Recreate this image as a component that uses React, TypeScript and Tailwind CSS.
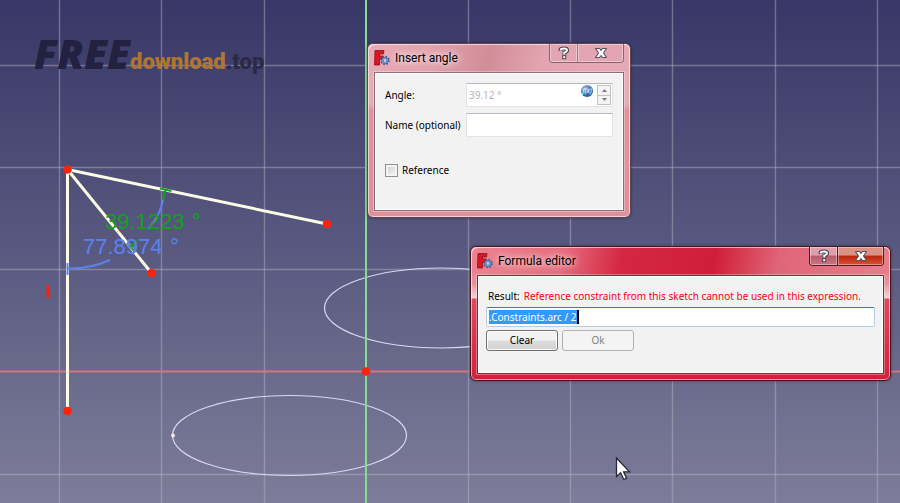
import { useEffect, useRef } from 'react';
import type { ReactNode } from 'react';
import clsx from 'clsx';

const GRID_X = [59, 161, 264, 468, 570, 672, 775, 877];
const GRID_Y = [65, 167, 269, 474];

function AppIcon() {
  return (
    <svg viewBox="0 0 16 16" className="size-4 shrink-0" aria-hidden="true">
      <path d="M1 0.5H10L9.5 4H5.5V6H9V9.2H5.5V15H0.5z" fill="#dc1620" stroke="#8c1218" strokeWidth="0.8" />
      <circle
        cx="11"
        cy="10.5"
        r="3.8"
        fill="none"
        stroke="#35609a"
        strokeWidth="2"
        strokeDasharray="1.492 1.492"
      />
      <circle cx="11" cy="10.5" r="2.4" fill="none" stroke="#35609a" strokeWidth="2.4" />
      <circle cx="11" cy="10.5" r="2.3" fill="none" stroke="#6d9bd3" strokeWidth="1.4" />
      <circle cx="11" cy="10.5" r="1.2" fill="#e9c9d2" />
    </svg>
  );
}

function HelpGlyph() {
  return (
    <svg viewBox="0 0 12 14" className="h-3.5 w-3" fill="none" aria-hidden="true">
      <path
        d="M2.5 5V3.5Q2.5 2.3 6 2.3T9.2 4.5Q9.2 5.8 6.4 6.8V8.8"
        stroke="#4b4550"
        strokeWidth="3.8"
      />
      <rect x="4.2" y="9.2" width="4" height="4" fill="#4b4550" />
      <path
        d="M2.8 4.6V3.8Q2.8 2.5 6 2.5T9 4.5Q9 5.6 6.3 6.6V8.4"
        stroke="#fff"
        strokeWidth="2"
      />
      <rect x="5.2" y="10.2" width="2" height="2" fill="#fff" />
    </svg>
  );
}

function CloseGlyph() {
  return (
    <svg viewBox="0 0 14 12" className="h-3 w-3.5" fill="none" aria-hidden="true">
      <path
        d="M1.5 1.5H5.5L7 3.3L8.5 1.5H12.5L9.5 6L12.5 10.5H8.5L7 8.7L5.5 10.5H1.5L4.5 6z"
        fill="#fff"
        stroke="#5a5460"
        strokeWidth="1.1"
        strokeLinejoin="round"
      />
    </svg>
  );
}

interface DialogWindowProps {
  title: string;
  active?: boolean;
  className?: string;
  children: ReactNode;
}

function DialogWindow({ title, active = false, className, children }: DialogWindowProps) {
  return (
    <section
      aria-label={title}
      className={clsx(
        'absolute flex flex-col rounded-md border px-1.5 pb-1.5 shadow-[inset_0_0_0_1px_#ffffff90,0_0_3px_#00000070]',
        active
          ? 'border-[#4a1822] bg-[linear-gradient(#e87888_0,#ea8e9b_36px,#f6d3d8_51px,#dc4a60_52px,#d51f3c_100%)]'
          : 'border-[#5a4652] bg-[linear-gradient(#e6aab6_0,#e6acb7_60px,#df939f_66px,#de919d_100%)]',
        className,
      )}
    >
      <header
        className={clsx(
          '-mx-1.5 flex h-7 shrink-0 items-start justify-between rounded-t-md px-1.5 shadow-[inset_1px_1px_0_#ffffff90,inset_-1px_0_0_#ffffff90]',
          active
            ? 'bg-[linear-gradient(100deg,#ea8492_0%,#e66b7d_22%,#d42743_36%,#d01e39_58%,#df6577_73%,#e67f8d_100%)]'
            : 'bg-[linear-gradient(105deg,#e8acb6_0%,#e3a1ad_25%,#d18e99_46%,#e2a4b0_66%,#e6aab6_100%)]',
        )}
      >
        <div className="flex h-7 items-center gap-[5px]">
          <AppIcon />
          <h2 className="font-['Roboto',sans-serif] text-xs leading-4 text-black [text-shadow:0_0_6px_#fff,0_0_10px_#ffffffb0]">
            {title}
          </h2>
        </div>
        <div
          className={clsx(
            'flex h-[19px] overflow-hidden rounded-b border border-t-0',
            active ? 'border-[#5b1722]' : 'border-[#8c6270]',
          )}
        >
          <button
            type="button"
            aria-label="Help"
            className={clsx(
              'flex w-7 items-center justify-center border-r shadow-[inset_0_0_0_1px_#ffffff60]',
              active
                ? 'border-[#5b1722] bg-[linear-gradient(#dfa0ac_45%,#b65a6c_50%,#d07585)]'
                : 'border-[#a87683] bg-[#e2a5b1]',
            )}
          >
            <HelpGlyph />
          </button>
          <button
            type="button"
            aria-label="Close"
            className={clsx(
              'flex w-[45px] items-center justify-center shadow-[inset_0_0_0_1px_#ffffff60]',
              active ? 'bg-[linear-gradient(#dc9185_45%,#b9270f_50%,#dc5030)]' : 'bg-[#e2a5b1]',
            )}
          >
            <CloseGlyph />
          </button>
        </div>
      </header>
      <div
        className={clsx(
          'flex-1 border bg-[#f2f2f2] shadow-[inset_0_0_0_1px_#fff,0_0_0_1px_#ffffff50]',
          active ? 'border-[#8a2535]' : 'border-[#8f6c75]',
        )}
      >
        {children}
      </div>
    </section>
  );
}

function InsertAngleDialog() {
  return (
    <DialogWindow title="Insert angle" className="top-[43px] left-[367px] w-[264px]">
      <form className="flex flex-col px-2.5 pt-2.5 pb-8">
        <div className="grid grid-cols-[81px_minmax(0,1fr)] items-center gap-y-1.5">
          <label htmlFor="angle">Angle:</label>
          <div className="flex h-6 border border-[#e1e3ea] border-t-[#b5b8c2] bg-white p-px">
            <input
              id="angle"
              type="text"
              disabled
              defaultValue="39.12 °"
              className="min-w-0 flex-1 px-px text-[#b4b4b4]"
            />
            <button
              type="button"
              aria-label="Edit formula"
              className="mr-1 flex size-3 items-center justify-center rounded-full bg-[radial-gradient(circle_at_35%_25%,#8db9e6,#2e66a8_60%,#1f4c86)] text-[7px] leading-3 text-white italic"
            >
              f(x)
            </button>
            <div className="flex w-3.5 flex-col">
              <button
                type="button"
                aria-label="Increase"
                className="flex flex-1 items-center justify-center border border-[#c2c2c2] bg-[#f4f4f4]"
              >
                <svg viewBox="0 0 5 3" className="h-[3px] w-[5px]" aria-hidden="true">
                  <path d="M0 3L2.5 0L5 3z" fill="#7b7b7b" />
                </svg>
              </button>
              <button
                type="button"
                aria-label="Decrease"
                className="flex flex-1 items-center justify-center border border-t-0 border-[#c2c2c2] bg-[#f4f4f4]"
              >
                <svg viewBox="0 0 5 3" className="h-[3px] w-[5px]" aria-hidden="true">
                  <path d="M0 0L2.5 3L5 0z" fill="#7b7b7b" />
                </svg>
              </button>
            </div>
          </div>
          <label htmlFor="name" className="whitespace-nowrap">
            Name (optional)
          </label>
          <input
            id="name"
            type="text"
            className="h-6 w-full min-w-0 border border-[#e1e3ea] border-t-[#b5b8c2] bg-white px-1"
          />
        </div>
        <label className="mt-[26px] flex items-center gap-1">
          <input
            type="checkbox"
            className="size-[13px] appearance-none border border-[#8e8f8f] bg-[linear-gradient(135deg,#c9cdd3,#f6f6f6)] shadow-[inset_0_0_0_2px_#f4f4f4]"
          />
          Reference
        </label>
      </form>
    </DialogWindow>
  );
}

function FormulaEditorDialog() {
  const expressionRef = useRef<HTMLInputElement>(null);

  useEffect(() => {
    expressionRef.current?.focus();
    expressionRef.current?.select();
  }, []);

  return (
    <DialogWindow active title="Formula editor" className="top-[246px] left-[470px] w-[421px]">
      <form className="flex flex-col px-2 pt-3 pb-[22px]">
        <label htmlFor="expression" className="flex gap-1 px-0.5 leading-4 whitespace-nowrap">
          Result:
          <output className="text-[#f5000f]">
            Reference constraint from this sketch cannot be used in this expression.
          </output>
        </label>
        <div className="relative mt-[3px]">
          <input
            id="expression"
            ref={expressionRef}
            type="text"
            defaultValue=".Constraints.arc / 2"
            className="h-5 w-full rounded-xs border border-[#b5cfe7] border-t-[#3d7bad] bg-white px-0.5 outline-none selection:bg-[#3399ff] selection:text-white"
          />
          <span className="absolute top-[3px] left-[91px] h-3.5 w-0.5 bg-black" />
        </div>
        <div className="mt-[3px] flex gap-1">
          <button
            type="button"
            className="h-[21px] w-[72px] rounded-[3px] border border-[#707070] bg-[linear-gradient(#f2f2f2_48%,#dddddd_52%,#cfcfcf)] shadow-[inset_0_0_0_1px_#fcfcfc]"
          >
            Clear
          </button>
          <button
            type="submit"
            disabled
            className="h-[21px] w-[72px] rounded-[3px] border border-[#adb2b5] bg-[#f4f4f4] text-[#838383]"
          >
            Ok
          </button>
        </div>
      </form>
    </DialogWindow>
  );
}

function SketchCanvas() {
  return (
    <svg className="absolute inset-0 h-full w-full" aria-label="Sketch">
      <g stroke="#b9b9c4" strokeOpacity="0.45">
        {GRID_X.map((x) => (
          <line key={x} x1={x + 0.5} x2={x + 0.5} y1="0" y2="100%" strokeWidth="1.4" />
        ))}
        {GRID_Y.map((y) => (
          <line key={y} y1={y + 0.5} y2={y + 0.5} x1="0" x2="100%" strokeWidth="1.4" />
        ))}
      </g>
      <line x1="0" x2="100%" y1="371.5" y2="371.5" stroke="#d8757a" strokeWidth="1.8" />

      <g fill="none" stroke="#d9d9f2" strokeWidth="1.2">
        <ellipse cx="289.5" cy="435.5" rx="117" ry="40" />
        <ellipse cx="441.5" cy="308" rx="117" ry="40" />
      </g>
      <circle cx="173" cy="435.5" r="2" fill="#f7e6f0" />
      <line x1="366" x2="366" y1="0" y2="100%" stroke="#86dc90" strokeWidth="2" />

      {/* Sketch geometry */}
      <g stroke="#fbfbe6" strokeWidth="3" strokeLinecap="round">
        <path d="M67.5 169.5V411" />
        <path d="M67.5 169.5L151.5 273" />
        <path d="M67.5 169.5L327 224" />
      </g>

      {/* Constraints */}
      <g fill="none" stroke="#5b82f0" strokeWidth="2">
        <path d="M163 200Q160 216 148 229" />
        <path d="M68 268.5Q90 269 110 260" />
        <path d="M67.5 263V275" />
      </g>
      <g fill="none" stroke="#14a01c" strokeWidth="2">
        <path d="M160 188.5L171.5 191M165.5 190L163 200" />
        <path d="M127 243L135 252M130.5 247L137 241" />
      </g>
      <g fontFamily="'Liberation Sans', Arial, sans-serif" fontSize="22">
        <text x="83" y="254" fill="#5b82f0">
          77.8974
        </text>
        <text x="170" y="254" fill="#5b82f0">
          °
        </text>
        <text x="105" y="229" fill="#14a01c">
          39.1223
        </text>
        <text x="192" y="229" fill="#14a01c">
          °
        </text>
      </g>
      <rect x="46.5" y="285" width="3" height="13" fill="#f5210d" />

      <g fill="#fb230c">
        <circle cx="67.5" cy="169.5" r="4.3" />
        <circle cx="67.5" cy="411" r="4.3" />
        <circle cx="151.5" cy="273" r="4.3" />
        <circle cx="327" cy="224" r="4.3" />
        <circle cx="366" cy="371.5" r="4.3" />
      </g>
    </svg>
  );
}

export default function App() {
  return (
    <main className="relative min-h-screen w-full overflow-hidden bg-linear-to-b from-[#383767] to-[#7d7d99] font-['Noto_Sans',sans-serif] text-[10px] text-black">
      <SketchCanvas />

      <div className="absolute top-[31px] left-[34px] flex items-baseline">
        <span className="font-['Open_Sans',sans-serif] text-[41px] leading-[44px] font-extrabold text-[#222140] italic">
          FREE
        </span>
        <span className="font-['Roboto',sans-serif] text-[22px] font-black text-[#b0762f]">
          download
        </span>
        <span className="font-['Roboto',sans-serif] text-[22px] font-black text-[#2a2947]">
          .top
        </span>
      </div>

      <InsertAngleDialog />
      <FormulaEditorDialog />

      <svg viewBox="0 0 16 24" className="absolute top-[457px] left-[615px] h-6 w-4" aria-hidden="true">
        <path
          d="M1.5 1V19.5L5.6 15.8L8.8 22.5L11.6 21.2L8.6 14.8H14.5z"
          fill="#fff"
          stroke="#26263c"
          strokeWidth="1.3"
        />
      </svg>
    </main>
  );
}
